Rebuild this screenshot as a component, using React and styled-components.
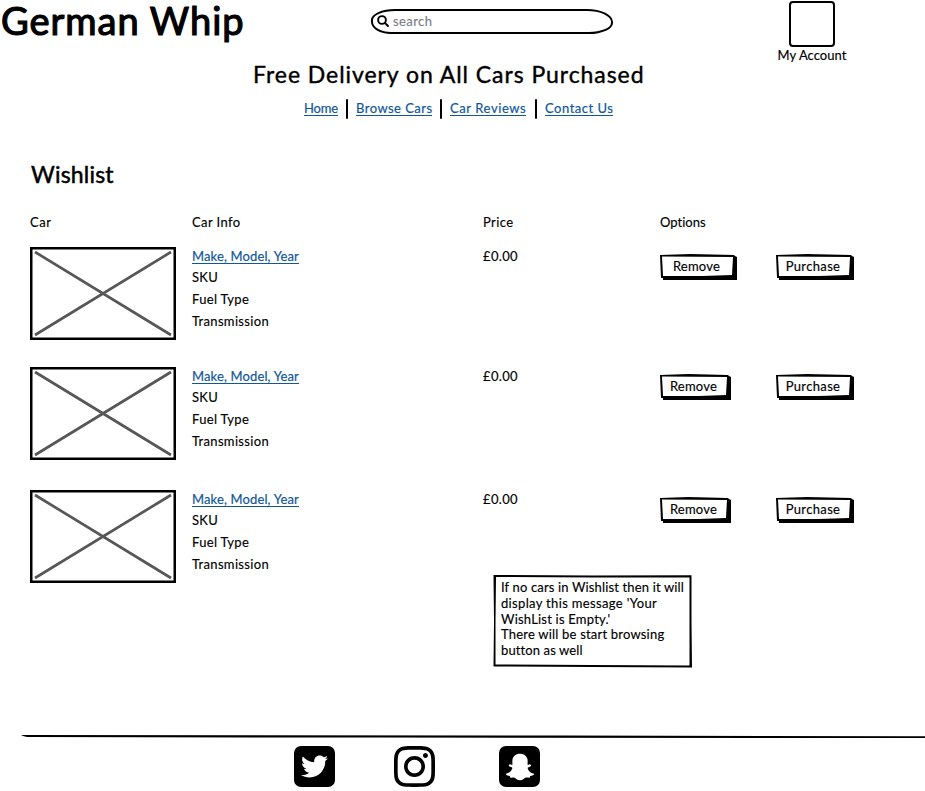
import React from "react";
import styled, { createGlobalStyle } from "styled-components";
import { FaTwitter, FaInstagram, FaSnapchatGhost } from "react-icons/fa";

const GlobalStyle = createGlobalStyle`
  * { box-sizing: border-box; }
  body {
    margin: 0;
    background: #fff;
    color: #000;
    font: 13px/22px Lato, sans-serif;
    font-variant-ligatures: none;
    overflow: hidden;
  }
`;

const Page = styled.div`
  display: flex;
  flex-direction: column;
  width: 925px;
  height: 791px;
  overflow: hidden;
`;

const Text = styled.span`
  display: block;
  white-space: nowrap;
  letter-spacing: ${(p) => p.$ls || 0}px;
  -webkit-text-stroke: 0.15px currentColor;
`;

const Header = styled.header`
  display: flex;
  align-items: flex-start;
  height: 63px;
`;

const Brand = styled.h1`
  margin: 0;
  padding-left: 1px;
  width: 371px;
  font-size: 38px;
  font-weight: 400;
  line-height: 40px;
  height: 46px;
  letter-spacing: 0.98px;
  white-space: nowrap;
  -webkit-text-stroke: 1.2px #000;
`;

const SearchBox = styled.label`
  display: flex;
  align-items: center;
  width: 242px;
  height: 25px;
  margin: 9px 176px 0 0;
  padding: 0 0 1px 4px;
  gap: 4px;
  border: 2px solid #000;
  border-radius: 24px 26px 24px 20px / 11px 13px 11px 12px;
  color: #7b7b85;
`;

const SearchGlyph = styled.svg`
  width: 12px;
  height: 12px;
  fill: none;
  stroke: #000;
  stroke-width: 1.9;
  stroke-linecap: round;
`;

const Account = styled.div`
  display: flex;
  flex-direction: column;
  align-items: center;
  width: 46px;
`;

const Avatar = styled.div`
  width: 46px;
  height: 46px;
  margin-top: 1px;
  border: 2px solid #000;
  border-radius: 4px;
`;

const AccountLabel = styled(Text)`
  line-height: 16px;
`;

const Promo = styled.h2`
  margin: 0 0 0 253px;
  font-size: 23px;
  font-weight: 400;
  line-height: 22px;
  letter-spacing: 0.94px;
  white-space: nowrap;
  -webkit-text-stroke: 0.4px #000;
`;

const Nav = styled.nav`
  display: flex;
  align-items: center;
  height: 22px;
  margin: 12px 0 0 304px;
`;

const Link = styled.a`
  width: ${(p) => p.$w}px;
  height: 15px;
  line-height: 15px;
  color: #115799;
  letter-spacing: ${(p) => p.$ls}px;
  white-space: nowrap;
  border-bottom: 1px solid #115799;
  -webkit-text-stroke: 0.2px currentColor;
`;

const Divider = styled.span`
  width: 2px;
  height: 20px;
  margin: 2px 8px 0 ${(p) => (p.$wide ? 9 : 8)}px;
  background: #000;
  border-radius: 1px;
`;

const Title = styled.h2`
  margin: 43px 0 0 31px;
  font-size: 23px;
  font-weight: 400;
  line-height: 24px;
  letter-spacing: 0.2px;
  -webkit-text-stroke: 0.5px #000;
`;

const Row = styled.section`
  display: grid;
  grid-template-columns: 162px 291px 177px 116px 1fr;
  align-items: start;
  flex: none;
  height: ${(p) => p.$h}px;
  padding-left: 30px;
`;

const HeadRow = styled(Row)`
  margin-top: 25px;
`;

const Photo = styled.div`
  width: 146px;
  height: 93px;
  margin-top: 2px;
  border: 2px solid #000;
  box-shadow: inset 0 0 0 0.5px #000;
`;

const Cross = styled.svg`
  display: block;
  width: 142px;
  height: 89px;
  stroke: #575757;
  stroke-width: 2.7;
`;

const Info = styled.div`
  display: flex;
  flex-direction: column;
  align-items: flex-start;
  padding-top: 4px;
`;

const Detail = styled(Text)`
  line-height: 22px;
`;

const Details = styled.div`
  padding-top: 2px;
`;

const Price = styled(Text)`
  line-height: 22px;
`;

const SketchButton = styled.button`
  position: relative;
  isolation: isolate;
  width: ${(p) => p.$w}px;
  height: 27px;
  margin: 9px 0 0;
  padding: 0 4px 3px 0;
  border: 0;
  background: none;
  color: #000;
  font: 13px/22px Lato, sans-serif;
  letter-spacing: ${(p) => p.$ls}px;
  -webkit-text-stroke: 0.15px #000;

  &::before,
  &::after {
    content: "";
    position: absolute;
    inset: 0;
    z-index: -1;
  }
  &::before {
    background: #000;
    clip-path: polygon(0 1px, 40% 0, calc(100% - 3px) 1px, calc(100% - 2px) 2px, 100% 3px, 100% 26px, 3px 26px, 3px 24px, 1px 24px);
  }
  &::after {
    background: #fff;
    clip-path: polygon(2px 2.5px, calc(100% - 4px) 3px, calc(100% - 5px) 21px, 55% 22px, 3px 22px);
  }
`;

const Note = styled.aside`
  position: relative;
  isolation: isolate;
  flex: none;
  width: 199px;
  height: 93px;
  margin-left: 493px;
  padding: 5px 8px;

  &::before,
  &::after {
    content: "";
    position: absolute;
    inset: 0;
    z-index: -1;
  }
  &::before {
    background: #000;
    clip-path: polygon(0.5px 0, 50% 0.5px, 198.5px 0.3px, 198.5px 50%, 199px 92.5px, 50% 92px, 0.5px 91.5px, 1px 50%);
  }
  &::after {
    background: #fff;
    clip-path: polygon(3px 2px, 50% 2.5px, 196.5px 2.5px, 196.5px 90.5px, 50% 90px, 2.5px 89.5px, 2.5px 50%);
  }
`;

const NoteLine = styled(Text)`
  line-height: 15.75px;
`;

const Footer = styled.footer`
  margin: auto 0 0;
  height: 56px;
`;

const Rule = styled.div`
  height: 3px;
  margin-left: 21px;
  background: #000;
  clip-path: polygon(0 0, 60% 0.6px, 100% 1.2px, 100% 3px, 40% 2.6px, 6px 2px, 2px 1px);
`;

const Socials = styled.div`
  display: flex;
  align-items: center;
  margin: 8px 0 0 294px;
`;

const Tile = styled.a`
  display: flex;
  align-items: center;
  justify-content: center;
  width: 41px;
  height: 41px;
  border-radius: 7px;
  background: #000;
  color: #fff;
  font-size: ${(p) => p.$size}px;
`;

const InstagramMark = styled(FaInstagram)`
  width: 41px;
  height: 47px;
  margin: -3px 64px -3px 59px;
`;

const rows = [
  { height: 120, removeWidth: 77 },
  { height: 123, removeWidth: 71 },
  { height: 87, removeWidth: 71 },
];

const noteLines = [
  ["If no cars in Wishlist then it will", 0.15],
  ["display this message 'Your", 0.34],
  ["WishList is Empty.'", 0.21],
  ["There will be start browsing", 0.2],
  ["button as well", 0.12],
];

function CarRow({ height, removeWidth }) {
  return (
    <Row $h={height}>
      <Photo>
        <Cross viewBox="0 0 142 89">
          <path d="M3 3 139 86M3 86 139 3" />
        </Cross>
      </Photo>
      <Info>
        <Link $w={107} $ls={0.13}>Make, Model, Year</Link>
        <Details>
          <Detail $ls={0.3}>SKU</Detail>
          <Detail $ls={0.3}>Fuel Type</Detail>
          <Detail $ls={0.33}>Transmission</Detail>
        </Details>
      </Info>
      <Price $ls={0.35}>£0.00</Price>
      <SketchButton $w={removeWidth} $ls={0.23}>Remove</SketchButton>
      <SketchButton $w={78} $ls={0.35}>Purchase</SketchButton>
    </Row>
  );
}

export default function App() {
  return (
    <Page>
      <GlobalStyle />
      <Header>
        <Brand>German Whip</Brand>
        <SearchBox>
          <SearchGlyph viewBox="0 0 12 12">
            <circle cx="5" cy="5" r="3.9" />
            <path d="m8 8 3 3" />
          </SearchGlyph>
          <Text $ls={0.4}>search</Text>
        </SearchBox>
        <Account>
          <Avatar />
          <AccountLabel $ls={0.05}>My Account</AccountLabel>
        </Account>
      </Header>
      <Promo>Free Delivery on All Cars Purchased</Promo>
      <Nav>
        <Link $w={34} $ls={-0.15}>Home</Link>
        <Divider />
        <Link $w={76} $ls={0.46}>Browse Cars</Link>
        <Divider />
        <Link $w={76} $ls={0.59}>Car Reviews</Link>
        <Divider $wide />
        <Link $w={68} $ls={0.52}>Contact Us</Link>
      </Nav>
      <Title>Wishlist</Title>
      <HeadRow $h={34}>
        <Text $ls={0.56}>Car</Text>
        <Text $ls={0.4}>Car Info</Text>
        <Text $ls={0.4}>Price</Text>
        <Text>Options</Text>
      </HeadRow>
      {rows.map((row, i) => (
        <CarRow key={i} {...row} />
      ))}
      <Note>
        {noteLines.map(([line, spacing]) => (
          <NoteLine key={line} $ls={spacing}>{line}</NoteLine>
        ))}
      </Note>
      <Footer>
        <Rule />
        <Socials>
          <Tile $size={27}><FaTwitter /></Tile>
          <InstagramMark />
          <Tile $size={28}><FaSnapchatGhost /></Tile>
        </Socials>
      </Footer>
    </Page>
  );
}
